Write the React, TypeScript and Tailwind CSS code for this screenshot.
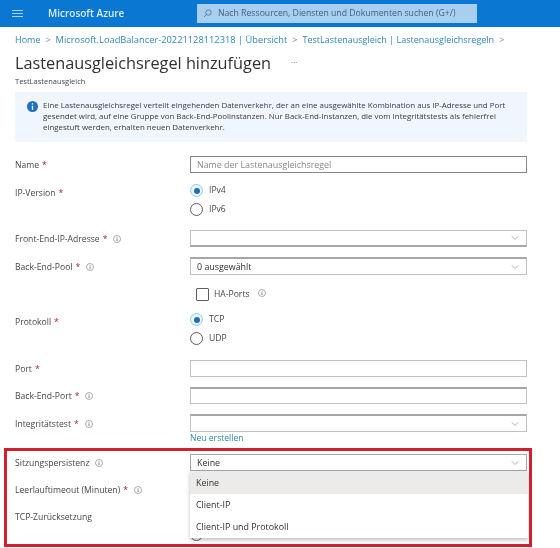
import React from "react";
import { ChevronDown } from "lucide-react";

const Info = ({ className = "" }: { className?: string }) => (
  <svg width="8" height="8" viewBox="0 0 8 8" className={`shrink-0 ${className}`}>
    <circle cx="4" cy="4" r="3.5" fill="none" stroke="#8a8886" strokeWidth="0.7" />
    <path d="M4 3.4V6M4 2v.7" stroke="#605e5c" strokeWidth="0.8" />
  </svg>
);

const Label = ({ text, star = true, info = false }: { text: string; star?: boolean; info?: boolean }) => (
  <div className="w-[175px] shrink-0 pt-[2px] flex items-center text-[8.6px] text-[#484644]">
    <span>{text}</span>
    {star && <span className="ml-[3px] text-[#a4262c]">*</span>}
    {info && <Info className="ml-[6px]" />}
  </div>
);

const Field = ({
  h = "h-[17px]",
  border = "border-[#a8a6a4]",
  value,
  placeholder,
  chevron = false,
}: {
  h?: string;
  border?: string;
  value?: string;
  placeholder?: string;
  chevron?: boolean;
}) => (
  <div className={`w-[337px] ${h} border ${border} bg-white flex items-center justify-between pl-[6px] pr-[5px] text-[8.9px]`}>
    <span className={placeholder ? "text-[#8a8886]" : "text-[#323130]"}>{placeholder ?? value}</span>
    {chevron && <ChevronDown size={12} strokeWidth={1} className="text-[#605e5c]" />}
  </div>
);

const Radio = ({ text, on = false }: { text: string; on?: boolean }) => (
  <div className="h-[19px] flex items-center gap-[6px] text-[8.6px] text-[#484644]">
    <span className={`w-[13px] h-[13px] rounded-full border flex items-center justify-center ${on ? "border-[#8fcdf0] bg-[#eaf6fd]" : "border-[#605e5c]"}`}>
      {on && <span className="w-[6px] h-[6px] rounded-full bg-[#1f6fb4]" />}
    </span>
    <span>{text}</span>
  </div>
);

const Row = ({ className = "", children }: { className?: string; children: React.ReactNode }) => (
  <div className={`flex items-center ${className}`}>{children}</div>
);

export default function App() {
  return (
    <div
      className="relative w-[560px] h-[548px] overflow-hidden bg-white blur-[0.3px]"
      style={{ fontFamily: '"Open Sans", "Noto Sans", sans-serif' }}
    >
      <header className="h-[27px] bg-[#0a78d2] flex items-center">
        <div className="ml-[12px] w-[11px] flex flex-col gap-[2px]">
          <span className="h-px bg-[#a9d3f2]" />
          <span className="h-px bg-[#a9d3f2]" />
          <span className="h-px bg-[#a9d3f2]" />
        </div>
        <span className="ml-[25px] w-[149px] text-[10px] font-semibold text-[#d8ecfb] whitespace-nowrap">Microsoft Azure</span>
        <div className="w-[280px] h-[19px] bg-[#a9cff0] flex items-center pl-[6px] gap-[6px] text-[8.7px] text-[#3f5f80]">
          <svg width="9" height="9" viewBox="0 0 9 9" fill="none" stroke="#3f6f9f" strokeWidth="0.8">
            <circle cx="5.5" cy="3.5" r="2.7" />
            <path d="M3.5 5.5L1 8" />
          </svg>
          <span className="whitespace-nowrap">Nach Ressourcen, Diensten und Dokumenten suchen (G+/)</span>
        </div>
      </header>

      <main className="pl-[15px]">
        <nav className="mt-[6px] h-[14px] flex items-center text-[9px] text-[#2f87b8] whitespace-nowrap">
          <span>Home</span>
          <span className="mx-[5px] text-[#8a8886]">&gt;</span>
          <span className="text-[9.3px]">Microsoft.LoadBalancer-20221128112318 | Übersicht</span>
          <span className="mx-[5px] text-[#8a8886]">&gt;</span>
          <span>TestLastenausgleich | Lastenausgleichsregeln</span>
          <span className="mx-[5px] text-[#8a8886]">&gt;</span>
        </nav>

        <div className="mt-[5px] h-[22px] flex items-center">
          <h1 className="text-[16.3px] font-medium text-[#323130] whitespace-nowrap">Lastenausgleichsregel hinzufügen</h1>
          <span className="ml-[20px] -mt-[2px] text-[8px] text-[#605e5c] leading-none">···</span>
        </div>
        <p className="mt-[1px] h-[12px] text-[7.5px] leading-[12px] text-[#484644]">TestLastenausgleich</p>

        <section className="mt-[5px] w-[512px] h-[50px] bg-[#f0f6fe] flex items-start pl-[12px] pt-[8px] gap-[5px]">
          <svg width="11" height="11" viewBox="0 0 10 10" className="shrink-0 mt-[1px]">
            <circle cx="5" cy="5" r="5" fill="#1f6fc0" />
            <path d="M5 4.4V8M5 2v1.2" stroke="#fff" strokeWidth="1.2" />
          </svg>
          <p className="text-[7.9px] leading-[11px] text-[#3b3a39] whitespace-nowrap">
            Eine Lastenausgleichsregel verteilt eingehenden Datenverkehr, der an eine ausgewählte Kombination aus IP-Adresse und Port
            <br />
            gesendet wird, auf eine Gruppe von Back-End-Poolinstanzen. Nur Back-End-Instanzen, die vom Integritätstests als fehlerfrei
            <br />
            eingestuft werden, erhalten neuen Datenverkehr.
          </p>
        </section>

        <Row className="mt-[14px]">
          <Label text="Name" />
          <Field placeholder="Name der Lastenausgleichsregel" border="border-[#8a8886]" />
        </Row>

        <div className="mt-[8px] flex h-[38px]">
          <div className="h-[19px] flex items-center pt-[3px]">
            <Label text="IP-Version" />
          </div>
          <div className="flex flex-col">
            <Radio text="IPv4" on />
            <Radio text="IPv6" />
          </div>
        </div>

        <Row className="mt-[11px]">
          <Label text="Front-End-IP-Adresse" info />
          <Field chevron border="border-[#c4c2c0] border-b-[#a8a6a4] border-b-2" />
        </Row>

        <Row className="mt-[10px]">
          <Label text="Back-End-Pool" info />
          <Field chevron value="0 ausgewählt" border="border-[#c4c2c0] border-t-[#a8a6a4] border-t-2" h="h-[18px]" />
        </Row>

        <div className="mt-[13px] ml-[181px] h-[13px] flex items-center text-[8.6px] text-[#484644]">
          <span className="w-[13px] h-[13px] border border-[#605e5c] rounded-[1px]" />
          <span className="ml-[5px]">HA-Ports</span>
          <Info className="ml-[8px] -mt-[3px]" />
        </div>

        <div className="mt-[9px] flex h-[38px]">
          <div className="h-[19px] flex items-center pt-[3px]">
            <Label text="Protokoll" />
          </div>
          <div className="flex flex-col">
            <Radio text="TCP" on />
            <Radio text="UDP" />
          </div>
        </div>

        <Row className="mt-[12px]">
          <Label text="Port" />
          <Field border="border-[#c4c2c0]" />
        </Row>
        <Row className="mt-[10px]">
          <Label text="Back-End-Port" info />
          <Field border="border-[#c4c2c0] border-t-[#a8a6a4] border-t-2" />
        </Row>
        <Row className="mt-[10px]">
          <Label text="Integritätstest" info />
          <Field chevron border="border-[#c4c2c0] border-t-[#a8a6a4] border-t-2" h="h-[18px]" />
        </Row>
        <div className="ml-[175px] h-[12px] flex items-center text-[8.6px] font-medium text-[#2f87a8]">Neu erstellen</div>

        <Row className="mt-[10px]">
          <Label text="Sitzungspersistenz" star={false} info />
          <Field chevron value="Keine" border="border-[#a8a6a4]" />
        </Row>
        <Row className="mt-[10px] h-[17px]">
          <Label text="Leerlauftimeout (Minuten)" info />
        </Row>
        <Row className="mt-[10px] h-[17px]">
          <Label text="TCP-Zurücksetzung" star={false} />
        </Row>
        <div className="mt-[3px] ml-[175px] w-[13px] h-[13px] rounded-full border border-[#605e5c]" />
      </main>

      {/* dropdown menu overlay */}
      <ul className="absolute left-[190px] top-[471px] w-[338px] h-[67px] bg-white text-[8.9px] text-[#323130] shadow-[0_2px_4px_rgba(0,0,0,0.25)]">
        <li className="h-[23px] pl-[6px] flex items-center bg-[#edebe9]">Keine</li>
        <li className="h-[22px] pl-[6px] flex items-center">Client-IP</li>
        <li className="h-[22px] pl-[6px] flex items-center">Client-IP und Protokoll</li>
      </ul>

      {/* red highlight overlay */}
      <div className="absolute left-[4px] top-[448px] w-[528px] h-[99px] border-[3px] border-[#d01f2f] pointer-events-none" />
    </div>
  );
}
